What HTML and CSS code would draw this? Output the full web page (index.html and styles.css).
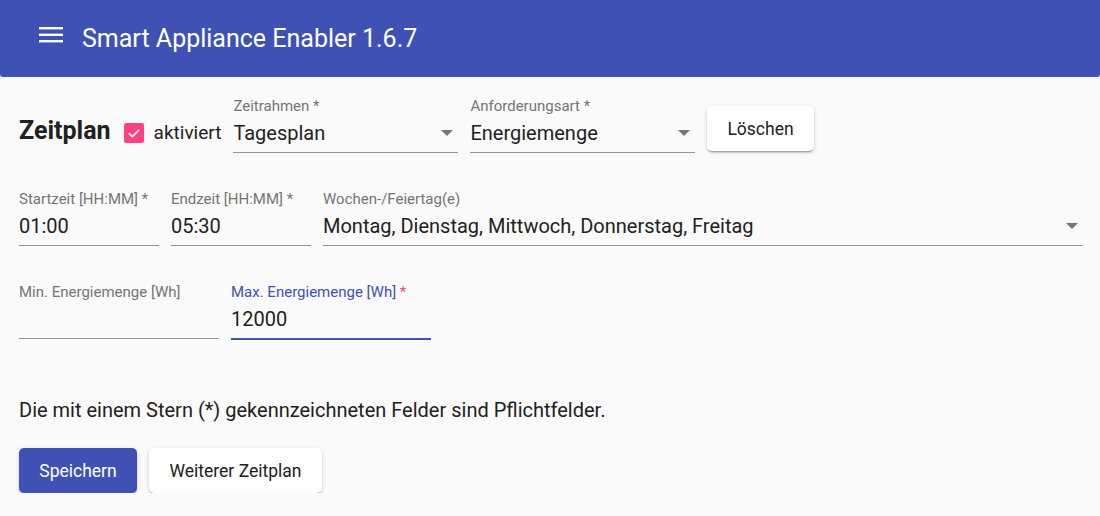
FILE: index.html
```html
<!DOCTYPE html>
<html lang="de">
<head>
<meta charset="utf-8">
<title>Smart Appliance Enabler</title>
<link rel="stylesheet" href="styles.css">
</head>
<body>
<header class="toolbar">
  <svg class="menu-icon" width="24" height="24" viewBox="0 0 24 24" aria-hidden="true">
    <rect x="0" y="3" width="24" height="2.4" fill="#fff"/>
    <rect x="0" y="9.6" width="24" height="2.4" fill="#fff"/>
    <rect x="0" y="16" width="24" height="2.4" fill="#fff"/>
  </svg>
  <span class="toolbar-title">Smart Appliance Enabler 1.6.7</span>
</header>

<main class="content">
  <div class="row row-first">
    <h2 class="heading">Zeitplan</h2>
    <label class="check">
      <span class="check-box">
        <svg width="20" height="20" viewBox="0 0 20 20" aria-hidden="true">
          <path d="M4.8 10.2 L8.3 13.6 L15.2 6.8" fill="none" stroke="#fff" stroke-width="1.8"/>
        </svg>
      </span>
      <span class="check-label">aktiviert</span>
    </label>
    <div class="field w225">
      <div class="f-label">Zeitrahmen *</div>
      <div class="f-value"><span class="f-text">Tagesplan</span><span class="arrow"></span></div>
    </div>
    <div class="field w225">
      <div class="f-label">Anforderungsart *</div>
      <div class="f-value"><span class="f-text">Energiemenge</span><span class="arrow"></span></div>
    </div>
    <button class="btn btn-white btn-delete">Löschen</button>
  </div>

  <div class="row row-second">
    <div class="field w140">
      <div class="f-label">Startzeit [HH:MM] *</div>
      <div class="f-value"><span class="f-text">01:00</span></div>
    </div>
    <div class="field w140">
      <div class="f-label">Endzeit [HH:MM] *</div>
      <div class="f-value"><span class="f-text">05:30</span></div>
    </div>
    <div class="field grow">
      <div class="f-label">Wochen-/Feiertag(e)</div>
      <div class="f-value"><span class="f-text">Montag, Dienstag, Mittwoch, Donnerstag, Freitag</span><span class="arrow"></span></div>
    </div>
  </div>

  <div class="row row-third">
    <div class="field w200">
      <div class="f-label">Min. Energiemenge [Wh]</div>
      <div class="f-value"><span class="f-text"></span></div>
    </div>
    <div class="field w200 focused">
      <div class="f-label">Max. Energiemenge [Wh] <span class="req">*</span></div>
      <div class="f-value"><span class="f-text">12000</span></div>
    </div>
  </div>

  <p class="note">Die mit einem Stern (*) gekennzeichneten Felder sind Pflichtfelder.</p>

  <div class="actions">
    <button class="btn btn-primary">Speichern</button>
    <button class="btn btn-white">Weiterer Zeitplan</button>
  </div>
</main>
</body>
</html>
```

FILE: styles.css
```css
* { box-sizing: border-box; }

html, body {
  margin: 0;
  padding: 0;
  background: #fafafa;
  font-family: Roboto, "Liberation Sans", Arial, sans-serif;
  color: #212121;
}

.toolbar {
  height: 77px;
  background: #3f51b5;
  color: #fff;
  display: flex;
  align-items: center;
  padding-left: 39px;
  border-radius: 0 0 3px 3px;
}

.menu-icon {
  display: block;
  width: 24px;
  height: 24px;
  margin-top: -6px;
}

.toolbar-title {
  margin-left: 19px;
  font-size: 25px;
  font-weight: 400;
  line-height: 30px;
}

.content {
  padding: 0 17px 0 19px;
}

.row {
  display: flex;
  align-items: flex-end;
  gap: 12px;
}

.row-first { padding-top: 20px; }
.row-second { margin-top: 37px; }
.row-third { margin-top: 37px; }

.heading {
  margin: 0 1px 7px 0;
  font-size: 25px;
  font-weight: 700;
  line-height: 30px;
  color: #212121;
}

.check {
  display: flex;
  align-items: center;
  gap: 10px;
  margin-bottom: 8px;
}

.check-box {
  width: 20px;
  height: 20px;
  border-radius: 2px;
  background: #ff4081;
  display: block;
}

.check-box svg { display: block; }

.check-label {
  font-size: 19px;
  line-height: 24px;
  color: #212121;
}

.field {
  display: flex;
  flex-direction: column;
  border-bottom: 1px solid #949494;
  padding-bottom: 7px;
}

.field.focused {
  border-bottom: 2px solid #3f51b5;
  margin-bottom: -1px;
}

.w225 { width: 225px; }
.w140 { width: 140px; }
.w200 { width: 200px; }
.grow { flex: 1; }

.f-label {
  font-size: 15px;
  line-height: 18px;
  color: #757575;
  white-space: nowrap;
}

.focused .f-label { color: #3f51b5; }
.req { color: #ff4081; }

.f-value {
  margin-top: 6px;
  height: 24px;
  display: flex;
  align-items: center;
  font-size: 20px;
  line-height: 24px;
  color: #212121;
}

.f-text {
  flex: 1;
  white-space: nowrap;
  overflow: hidden;
}

.arrow {
  width: 0;
  height: 0;
  border-left: 6px solid transparent;
  border-right: 6px solid transparent;
  border-top: 6px solid #757575;
  margin-right: 5px;
}

.btn {
  font-family: Roboto, "Liberation Sans", Arial, sans-serif;
  font-size: 17.5px;
  font-weight: 400;
  height: 45px;
  padding: 0 20px;
  border: none;
  border-radius: 5px;
  cursor: pointer;
  box-shadow: 0 3px 1px -2px rgba(0,0,0,.2), 0 2px 2px 0 rgba(0,0,0,.14), 0 1px 5px 0 rgba(0,0,0,.12);
}

.btn-white {
  background: #fff;
  color: #212121;
}

.btn-primary {
  background: #3f51b5;
  color: #fff;
}

.btn-delete {
  margin-bottom: 1px;
  position: relative;
  top: -1px;
}

.note {
  margin: 58px 0 0;
  font-size: 20px;
  line-height: 26px;
  color: #212121;
}

.actions {
  display: flex;
  gap: 12px;
  margin-top: 25px;
}

.actions .btn-primary { width: 118px; }
.actions .btn-white { width: 173px; }
```
